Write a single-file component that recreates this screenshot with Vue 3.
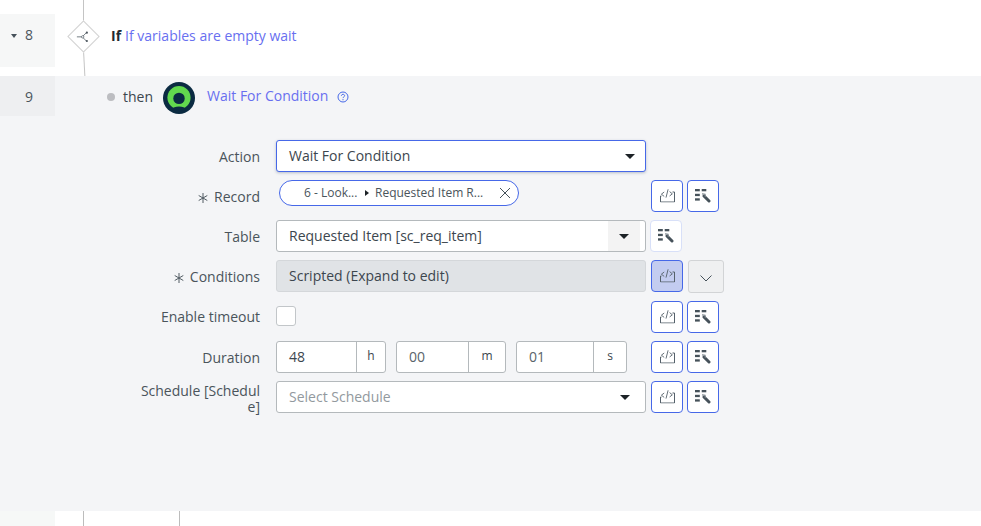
<template>
  <div class="page">
    <svg class="defs" aria-hidden="true">
      <symbol id="code" viewBox="0 0 15 13.5">
        <path d="M.5 7v6h14V3h-2M.5 7h1" fill="none" stroke="#55616a" stroke-width="1" />
        <path d="M4.2 3 1.4 5.2l2.8 2.2M8.1.3 6 8.6M9.6 2.6l2.7 2.2L9.6 7" fill="none" stroke="#55616a" stroke-width=".9" />
      </symbol>
      <symbol id="tools" viewBox="0 0 16 14">
        <g fill="#46525a">
          <rect x="0" y="0" width="4.8" height="2.3" />
          <rect x="6.7" y="0" width="4.6" height="2.3" />
          <rect x="0" y="4.8" width="4.8" height="2.3" />
          <rect x="0" y="9.3" width="4.8" height="2.3" />
        </g>
        <path d="M9 7l5 5" stroke="#46525a" stroke-width="3" stroke-linecap="round" />
        <path d="M7 4.8l3 .4.4 2.6" fill="none" stroke="#7b858c" stroke-width="1.2" />
      </symbol>
      <symbol id="star" viewBox="0 0 10 10">
        <path d="M5 0v10M.7 2.5l8.6 5M9.3 2.5l-8.6 5" stroke="#505b62" stroke-width="1" fill="none" />
      </symbol>
    </svg>

    <div class="step8">
      <div class="gutter gutter-8">
        <span class="caret"></span>
        <span class="num">8</span>
      </div>
      <div class="step8-body">
        <span class="line line-top"></span>
        <span class="line line-bottom"></span>
        <div class="diamond">
          <svg class="flow" viewBox="0 0 14 13" width="13" height="12">
            <path d="M0 6.5h6M6 6.5 10.5 2M6 6.5l4.5 4.5" fill="none" stroke="#5a646c" stroke-width=".9" />
            <circle cx="6.5" cy="6.5" r="1.3" fill="#fff" stroke="#5a646c" stroke-width=".8" />
            <circle cx="11" cy="2" r="1.2" fill="#4c565e" />
            <circle cx="11" cy="11" r="1.2" fill="#4c565e" />
          </svg>
        </div>
        <b class="if">If</b>
        <span class="link">If variables are empty wait</span>
      </div>
    </div>

    <div class="step9">
      <div class="step9-head">
        <div class="gutter gutter-9"><span class="num">9</span></div>
        <span class="dot"></span>
        <span class="then">then</span>
        <svg class="logo" viewBox="0 0 32 32" width="32" height="32">
          <circle cx="16" cy="16" r="16" fill="#0b2b42" />
          <circle cx="16" cy="15.6" r="11.6" fill="#62d84e" />
          <circle cx="16" cy="16.4" r="5.7" fill="#0b2b42" />
          <ellipse cx="16" cy="27.6" rx="6.5" ry="3.2" fill="#0b2b42" />
        </svg>
        <span class="link action-name">Wait For Condition</span>
        <svg class="help" viewBox="0 0 12 12" width="12" height="12">
          <circle cx="6" cy="6" r="5" fill="none" stroke="#4668e8" stroke-width="1" />
          <path d="M4.4 4.8c0-2 3.2-2 3.2-.1 0 1.2-1.6 1.2-1.6 2.4" fill="none" stroke="#4668e8" stroke-width="1" />
          <circle cx="6" cy="8.7" r=".6" fill="#4668e8" />
        </svg>
      </div>

      <div class="form">
        <div class="row">
          <label class="label">Action</label>
          <div class="select focused">
            <span class="val">Wait For Condition</span>
            <span class="arrow"></span>
          </div>
        </div>

        <div class="row">
          <label class="label"><svg class="req" width="10" height="10"><use href="#star" /></svg>Record</label>
          <div class="pill-wrap">
            <div class="pill">
              <span class="pill-a">6 - Look...</span>
              <span class="pill-arrow"></span>
              <span class="pill-b">Requested Item R...</span>
              <svg class="pill-x" viewBox="0 0 12 12" width="12" height="12">
                <path d="M1 1l10 10M11 1 1 11" stroke="#46525a" stroke-width="1" />
              </svg>
            </div>
          </div>
          <div class="btns">
            <button class="icon-btn"><svg width="15" height="13.5"><use href="#code" /></svg></button>
            <button class="icon-btn"><svg width="16" height="14"><use href="#tools" /></svg></button>
          </div>
        </div>

        <div class="row">
          <label class="label">Table</label>
          <div class="select table-select">
            <span class="val">Requested Item [sc_req_item]</span>
            <span class="table-drop"><span class="arrow"></span></span>
          </div>
          <div class="btns btns-table">
            <button class="icon-btn pale"><svg width="16" height="14"><use href="#tools" /></svg></button>
          </div>
        </div>

        <div class="row">
          <label class="label"><svg class="req" width="10" height="10"><use href="#star" /></svg>Conditions</label>
          <div class="select readonly"><span class="val">Scripted (Expand to edit)</span></div>
          <div class="btns">
            <button class="icon-btn active"><svg width="15" height="13.5"><use href="#code" /></svg></button>
            <button class="expand">
              <svg viewBox="0 0 12 7" width="12" height="7"><path d="M.5.5 6 6 11.5.5" fill="none" stroke="#46525a" stroke-width="1" /></svg>
            </button>
          </div>
        </div>

        <div class="row row-timeout">
          <label class="label">Enable timeout</label>
          <div class="check-wrap"><span class="check"></span></div>
          <div class="btns">
            <button class="icon-btn"><svg width="15" height="13.5"><use href="#code" /></svg></button>
            <button class="icon-btn"><svg width="16" height="14"><use href="#tools" /></svg></button>
          </div>
        </div>

        <div class="row">
          <label class="label">Duration</label>
          <div class="duration">
            <div v-for="d in durations" :key="d.unit" class="time" :style="{ width: d.width + 'px' }">
              <span class="time-val" :class="{ dark: d.unit === 'h' }">{{ d.value }}</span>
              <span class="time-unit" :style="{ width: d.unitWidth + 'px' }">{{ d.unit }}</span>
            </div>
          </div>
          <div class="btns">
            <button class="icon-btn"><svg width="15" height="13.5"><use href="#code" /></svg></button>
            <button class="icon-btn"><svg width="16" height="14"><use href="#tools" /></svg></button>
          </div>
        </div>

        <div class="row">
          <label class="label label-wrap">Schedule [Schedule]</label>
          <div class="select schedule">
            <span class="val placeholder">Select Schedule</span>
            <span class="arrow"></span>
          </div>
          <div class="btns">
            <button class="icon-btn"><svg width="15" height="13.5"><use href="#code" /></svg></button>
            <button class="icon-btn"><svg width="16" height="14"><use href="#tools" /></svg></button>
          </div>
        </div>
      </div>
    </div>

    <div class="tail">
      <div class="tail-gutter"></div>
      <span class="tail-line first"></span>
      <span class="tail-line second"></span>
    </div>
  </div>
</template>

<script setup>
const durations = [
  { value: '48', unit: 'h', width: 110, unitWidth: 29 },
  { value: '00', unit: 'm', width: 110, unitWidth: 37 },
  { value: '01', unit: 's', width: 111, unitWidth: 33 }
]
</script>

<style scoped>
.page {
  width: 981px;
  height: 526px;
  overflow: hidden;
  background: #fff;
  font-family: "Open Sans", "Noto Sans", sans-serif;
  font-size: 14px;
  color: #3c464e;
  position: relative;
}
.defs { position: absolute; width: 0; height: 0; }
.step8 { display: flex; height: 76px; }
.gutter {
  width: 55px;
  flex: none;
  display: flex;
  align-items: center;
  position: relative;
}
.gutter-8 { margin-top: 14px; height: 53px; background: #f6f7f7; }
.gutter-9 { height: 40px; background: #eeeff1; margin-right: 52px; align-self: flex-start; }
.num { position: absolute; left: 25px; color: #4b555c; }
.gutter-8 .num { top: 11px; }
.gutter-9 .num { top: 11px; }
.caret {
  position: absolute;
  left: 11px;
  top: 20px;
  border-left: 3px solid transparent;
  border-right: 3px solid transparent;
  border-top: 4px solid #46525a;
}
.step8-body {
  flex: 1;
  position: relative;
  display: flex;
  align-items: center;
  height: 70px;
  padding-left: 56px;
}
.line { position: absolute; left: 28px; width: 1px; background: #c4c4c4; }
.line-top { top: 0; height: 21px; }
.line-bottom { top: 50px; height: 26px; transform: rotate(-3deg); transform-origin: top; }
.diamond {
  position: absolute;
  left: 16.5px;
  top: 24.5px;
  width: 23px;
  height: 23px;
  box-sizing: border-box;
  transform: rotate(45deg);
  background: #fff;
  border: 1px solid #d2d2d2;
  display: flex;
  align-items: center;
  justify-content: center;
}
.flow { transform: rotate(-45deg); flex: none; }
.if { color: #22292e; font-weight: 700; margin-right: 4px; }
.link { color: #686ff0; }
.step9 {
  height: 435px;
  background: #f4f5f7;
}
.step9-head { display: flex; align-items: flex-start; height: 64px; }
.dot {
  width: 8px;
  height: 8px;
  margin-top: 17px;
  border-radius: 50%;
  background: #bcbdc1;
  margin-right: 8px;
}
.then { line-height: 20px; margin-top: 11px; margin-right: 10px; color: #3c464e; }
.logo { margin-top: 6px; margin-right: 12px; }
.action-name { line-height: 20px; margin-top: 10px; margin-right: 9px; }
.help { margin-top: 15px; }
.form {
  display: flex;
  flex-direction: column;
  gap: 8px;
}
.row {
  display: grid;
  grid-template-columns: 260px 370px auto;
  grid-template-rows: 32px;
  column-gap: 16px;
  height: 32px;
  align-items: center;
}
.row-timeout { margin-top: 1px; }
.row-timeout .label { padding-top: 0; }
.row .btns { margin-left: -11px; align-self: start; }
.label {
  text-align: right;
  color: #4a545b;
  line-height: 16px;
  padding-left: 136px;
  box-sizing: border-box;
  padding-top: 2px;
}
.label-wrap { word-break: break-all; padding-top: 4px; }
.req { margin-right: 6px; vertical-align: -1px; }
.select {
  height: 32px;
  box-sizing: border-box;
  border: 1px solid #b4b9bc;
  border-radius: 3px;
  background: #fff;
  display: flex;
  align-items: center;
  justify-content: space-between;
  padding-left: 12px;
  padding-right: 10px;
}
.val { margin-top: -2px; }
.focused {
  border-color: #4668e8;
  box-shadow: 0 1px 3px rgba(40, 60, 100, 0.3);
}
.schedule { padding-right: 15px; }
.table-select { padding-right: 5px; }
.table-drop {
  width: 32px;
  height: 30px;
  background: #f3f3f3;
  display: flex;
  align-items: center;
  justify-content: center;
}
.readonly {
  background: #e0e3e6;
  border-color: #d4d7da;
}
.arrow {
  border-left: 5px solid transparent;
  border-right: 5px solid transparent;
  border-top: 5px solid #1c2226;
  display: block;
}
.placeholder { color: #92999e; }
.pill-wrap { padding-left: 3px; height: 32px; }
.pill {
  width: 240px;
  height: 26px;
  box-sizing: border-box;
  border: 1px solid #4668e8;
  border-radius: 13px;
  background: #fff;
  display: flex;
  align-items: center;
  padding-left: 24px;
  font-size: 12px;
  color: #4a545b;
}
.pill-a { width: 61px; white-space: nowrap; margin-top: -1px; }
.pill-arrow {
  border-top: 3.5px solid transparent;
  border-bottom: 3.5px solid transparent;
  border-left: 4px solid #1c2226;
  margin-right: 6px;
}
.pill-b { white-space: nowrap; width: 124px; flex: none; margin-top: -1px; }
.pill-x { flex: none; }
.btns { display: flex; gap: 4px; }
.row .btns-table { margin-left: -12px; }
.icon-btn {
  width: 32px;
  height: 32px;
  padding: 0;
  box-sizing: border-box;
  border: 1px solid #4668e8;
  border-radius: 4px;
  background: #fff;
  display: flex;
  align-items: center;
  justify-content: center;
}
.icon-btn svg { display: block; }
.pale { border-color: #d8e0f8; }
.active { background: #c3ccf0; }
.expand {
  width: 36px;
  height: 33px;
  margin-left: 1px;
  padding: 3px 0 0;
  box-sizing: border-box;
  border: 1px solid #d2d4d6;
  border-radius: 3px;
  background: #eff0f1;
  display: flex;
  align-items: center;
  justify-content: center;
}
.check-wrap { display: flex; align-items: center; margin-top: -2px; }
.check {
  width: 20px;
  height: 20px;
  box-sizing: border-box;
  border: 1px solid #c2c6c9;
  border-radius: 3px;
  background: #fff;
}
.duration { display: flex; gap: 10px; }
.time {
  height: 32px;
  box-sizing: border-box;
  border: 1px solid #b4b9bc;
  border-radius: 3px;
  background: #fff;
  display: flex;
  align-items: center;
}
.time-val { flex: 1; padding-left: 12px; color: #5a646b; margin-top: -1px; }
.time-val.dark { color: #3c464e; }
.time-unit {
  height: 100%;
  flex: none;
  border-left: 1px solid #b4b9bc;
  display: flex;
  align-items: center;
  justify-content: center;
  font-size: 12px;
  padding-bottom: 3px;
  box-sizing: border-box;
}
.tail { height: 15px; position: relative; }
.tail-gutter { width: 55px; height: 100%; background: #f6f8f7; }
.tail-line { position: absolute; top: 0; width: 1px; height: 100%; background: #bcbcbc; }
.first { left: 83px; }
.second { left: 179px; }
</style>

<style>
html, body { margin: 0; background: #fff; }
</style>
